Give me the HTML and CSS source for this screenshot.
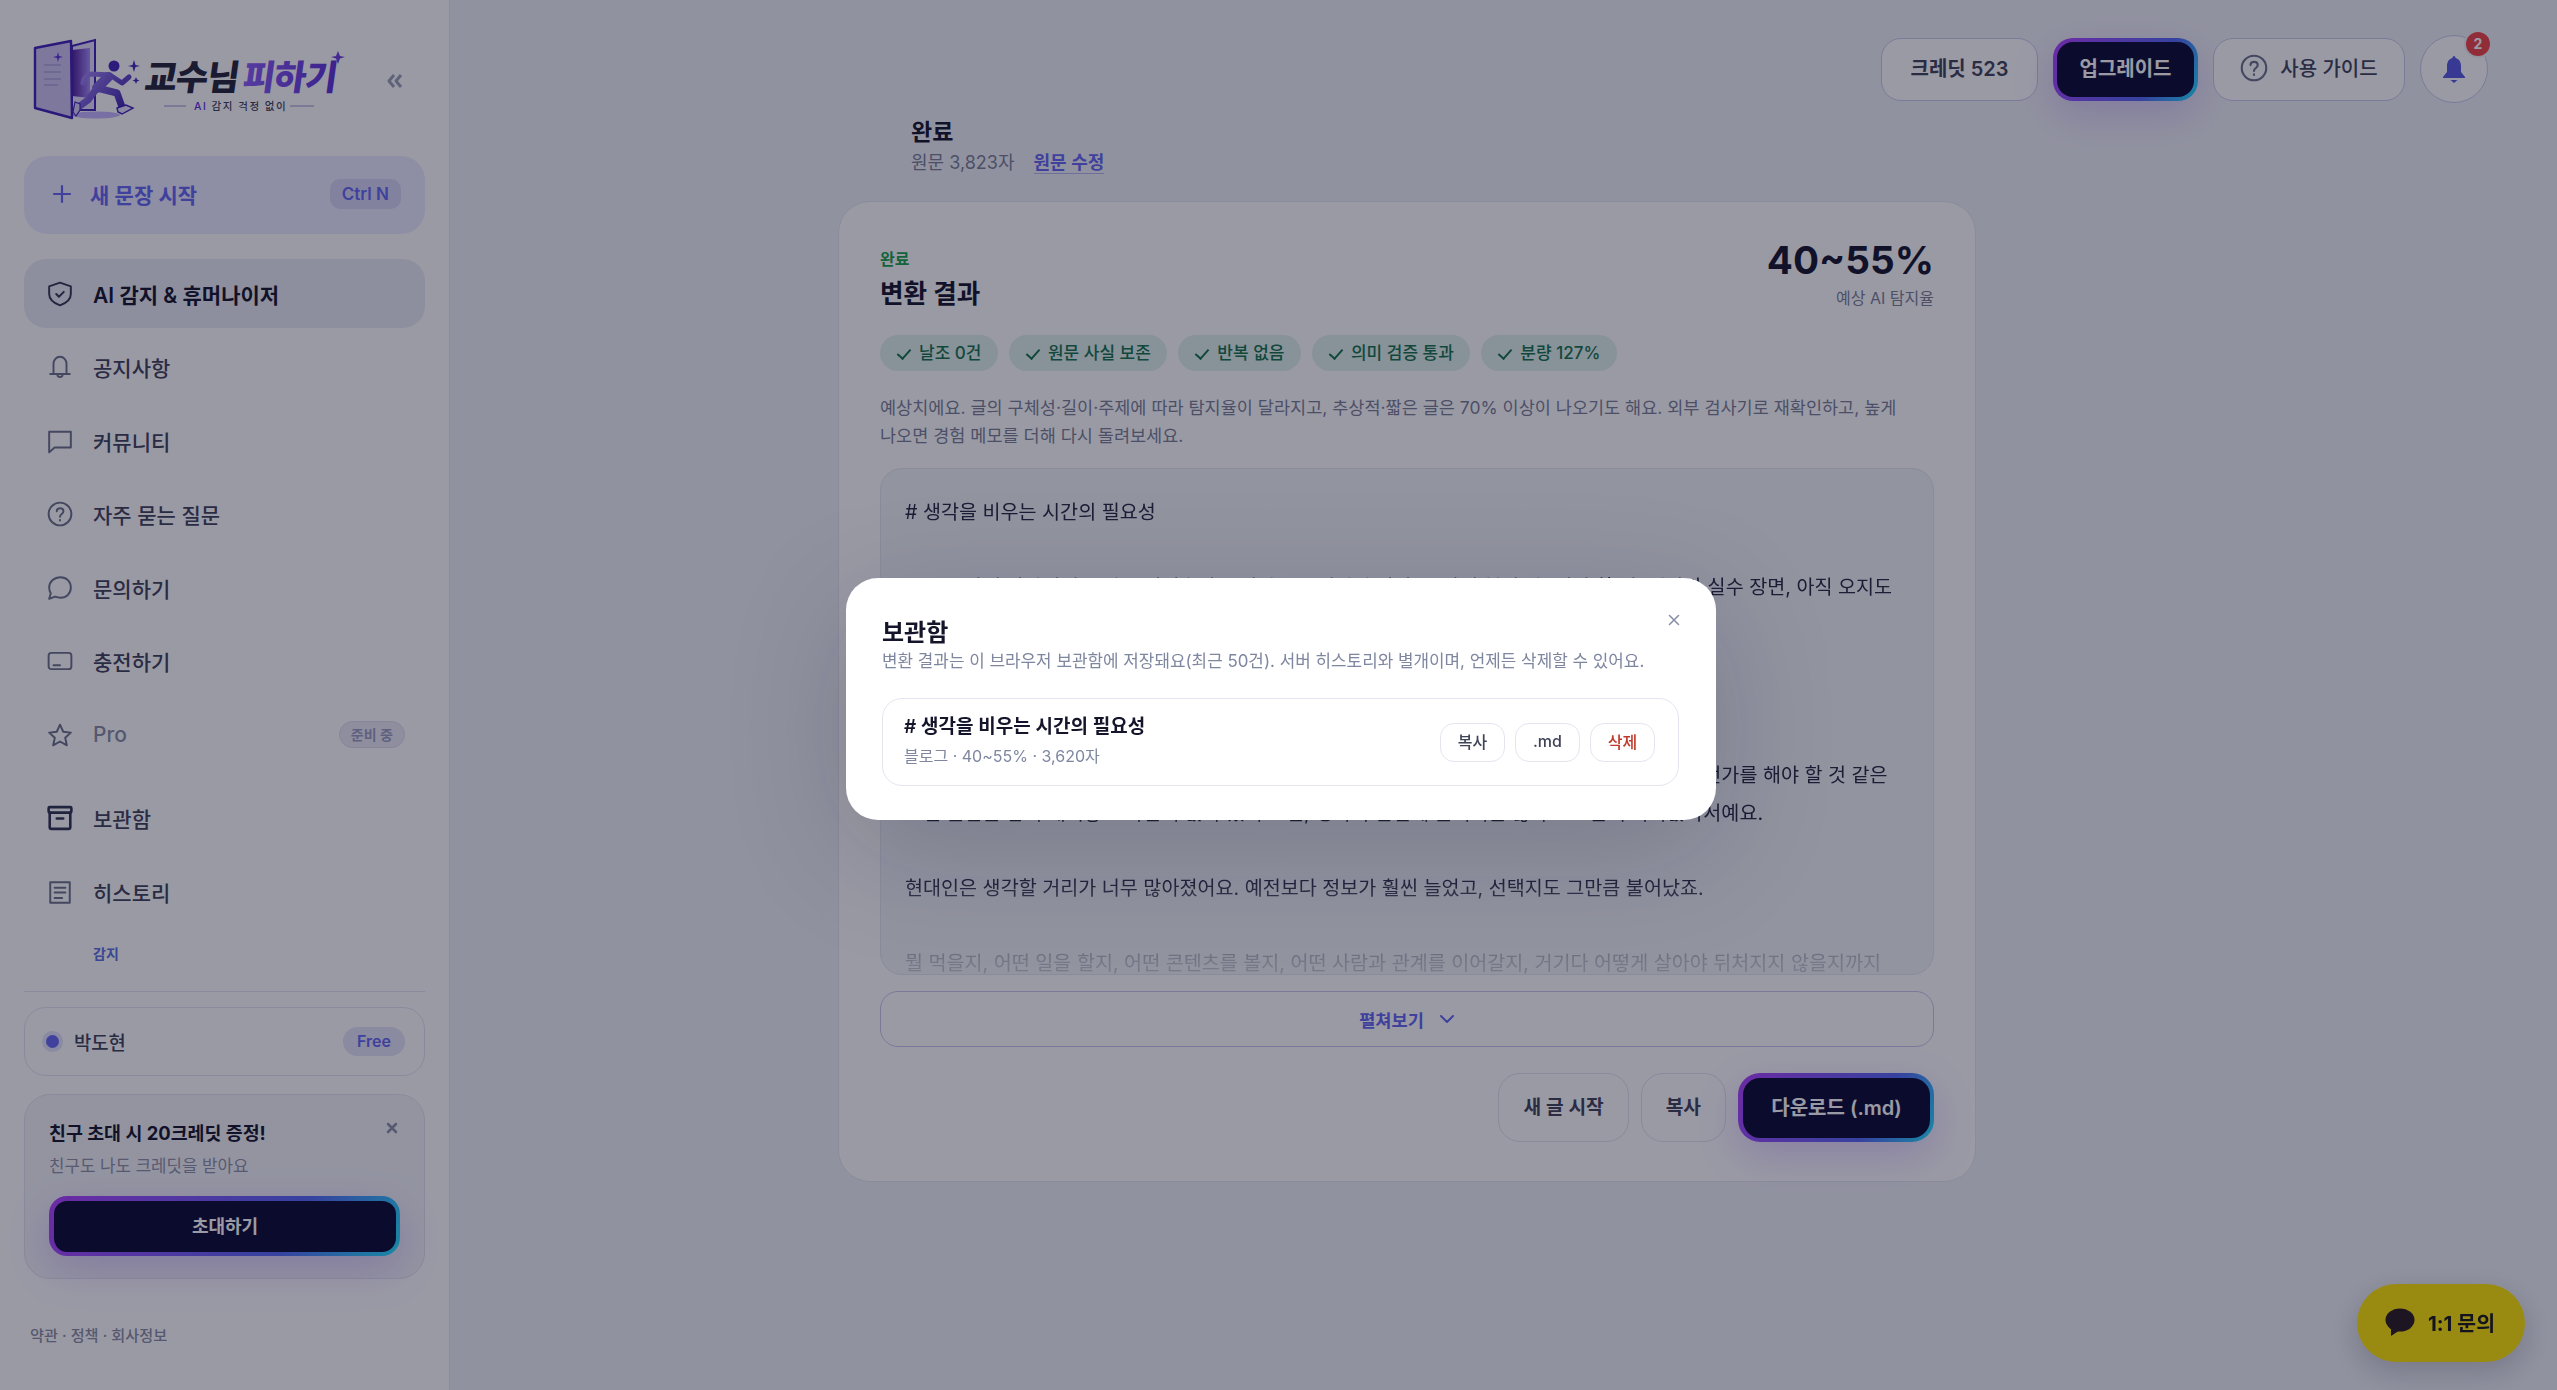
FILE: index.html
```html
<!DOCTYPE html>
<html lang="ko">
<head>
    <meta charset="UTF-8">
    <title>교수님 피하기</title>
    <link rel="stylesheet" href="styles.css">
</head>
<body>
    <aside class="sidebar">
        <div class="brand">
            <svg class="logo" width="320" height="90" viewBox="0 0 320 90">
                <defs>
                    <linearGradient id="doorFill" x1="0" y1="0" x2="1" y2="0">
                        <stop offset="0" stop-color="#4c1d95"/>
                        <stop offset="1" stop-color="#a78bfa"/>
                    </linearGradient>
                    <linearGradient id="runFill" gradientUnits="userSpaceOnUse" x1="50" y1="35" x2="95" y2="75">
                        <stop offset="0" stop-color="#a78bfa"/>
                        <stop offset="1" stop-color="#3b1fa8"/>
                    </linearGradient>
                    <linearGradient id="nameFill" x1="0" y1="0" x2="1" y2="0">
                        <stop offset="0" stop-color="#8b5cf6"/>
                        <stop offset="1" stop-color="#5b30d6"/>
                    </linearGradient>
                </defs>
                <ellipse cx="66" cy="79" rx="24" ry="3.5" fill="#c4b5fd"/>
                <path d="M42 10 L65 4 V74 L42 74 Z" fill="#e2dcf8" stroke="#3f1fb5" stroke-width="2"/>
                <path d="M42 14 L60 12 V62 L42 60 Z" fill="url(#doorFill)"/>
                <path d="M5 12 L41 5 L42 82 L5 72 Z" fill="#cfc6f0" stroke="#3f1fb5" stroke-width="2.4" stroke-linejoin="round"/>
                <path d="M14 29 H31 M14 36 H31 M14 43 H31 M14 49 H28" stroke="#9a8fd0" stroke-width="1.2"/>
                <path d="M28 16 L29 20 L33 21 L29 22 L28 26 L27 22 L23 21 L27 20 Z" fill="#5b30d6"/>
                <circle cx="84" cy="30" r="5.5" fill="#4526b8"/>
                <g fill="none" stroke="url(#runFill)" stroke-linecap="round" stroke-linejoin="round">
                    <path d="M80 39 L62 38 C57 38 54 42 53 47 M80 39 L92 47 L99 41" stroke-width="5"/>
                    <path d="M78 41 L67 52" stroke-width="10"/>
                    <path d="M67 52 L58 64 L47 72 M67 52 L87 57 L92 71" stroke-width="7"/>
                </g>
                <path d="M45 66 L50 68 L50 74 L46 80 L43 76 Z" fill="#d8d0f4" stroke="#4526b8" stroke-width="1.2"/>
                <path d="M87 72 L96 69 L103 72 L92 78 L88 76 Z" fill="#e6e1fa" stroke="#3f1fb5" stroke-width="1.4"/>
                <path d="M104 24 L105.5 29 L110 30 L105.5 31 L104 36 L102.5 31 L98 30 L102.5 29 Z" fill="#4526b8"/>
                <path d="M106 41 L107 43.5 L109.5 44.5 L107 45.5 L106 48 L105 45.5 L102.5 44.5 L105 43.5 Z" fill="#4526b8"/>
                <path d="M308 15 L310 20 L315 21 L310 22.5 L308 28 L306 22.5 L301 21 L306 20 Z" fill="#6d3fe0"/>
                <text class="logo-name" x="114" y="54" transform="skewX(-8) translate(7 0)">교수님</text>
                <text class="logo-name logo-name-accent" x="212" y="54" transform="skewX(-8) translate(7 0)">피하기</text>
                <path d="M134 70 H156 M260 70 H284" stroke="#9a8fd0" stroke-width="1"/>
                <text class="logo-tag" x="164" y="74"><tspan class="logo-tag-ai">AI</tspan> 감지 걱정 없이</text>
            </svg>
            <svg class="collapse" width="16" height="14" viewBox="0 0 16 14" fill="none" stroke="#9aa0b4" stroke-width="3" stroke-linejoin="round">
                <path d="M7 1 L2 7 L7 13 M14 1 L9 7 L14 13"/>
            </svg>
        </div>

        <button class="new-btn">
            <svg width="20" height="20" viewBox="0 0 20 20" stroke="currentColor" stroke-width="2.2" stroke-linecap="round"><path d="M10 2 V18 M2 10 H18"/></svg>
            <span class="new-label">새 문장 시작</span>
            <span class="shortcut">Ctrl N</span>
        </button>

        <nav class="nav">
            <a class="nav-item active">
                <svg class="nav-icon" viewBox="0 0 24 24"><path d="M12 1.5 L22 5 V12 C22 17 17.5 20.5 12 22.5 C6.5 20.5 2 17 2 12 V5 Z"/><path d="M8.5 12 L11 14.5 L15.5 10"/></svg>
                AI 감지 &amp; 휴머나이저
            </a>
            <a class="nav-item">
                <svg class="nav-icon" viewBox="0 0 24 24"><path d="M6 18 V9 C6 5.5 8.5 2.5 12 2.5 C15.5 2.5 18 5.5 18 9 V18 M3 18.5 H21 M9.5 19 C10 22 14 22 14.5 19"/></svg>
                공지사항
            </a>
            <a class="nav-item">
                <svg class="nav-icon" viewBox="0 0 24 24"><path d="M2 3.5 H22 V18 H7 L2 22.5 Z"/></svg>
                커뮤니티
            </a>
            <a class="nav-item">
                <svg class="nav-icon" viewBox="0 0 24 24"><circle cx="12" cy="12" r="10.5"/><path d="M9 9.5 C9 5.8 15.2 5.8 15.2 9.5 C15.2 12 12 12 12 14.5 M12 17.5 V18"/></svg>
                자주 묻는 질문
            </a>
            <a class="nav-item">
                <svg class="nav-icon" viewBox="0 0 24 24"><path d="M12.5 2 C18 2 22 6 22 11.5 C22 17 18 21 12.5 21 C10.5 21 9 20.6 7.5 20 L2 22 L3.5 17 C2.5 15.5 2 13.5 2 11.5 C2 6 7 2 12.5 2 Z"/></svg>
                문의하기
            </a>
            <a class="nav-item">
                <svg class="nav-icon" viewBox="0 0 24 24"><rect x="1.5" y="4.5" width="21" height="15" rx="2.5"/><path d="M6 16 H12"/></svg>
                충전하기
            </a>
            <a class="nav-item muted">
                <svg class="nav-icon" viewBox="0 0 24 24"><path d="M12 2.5 L15 9 L22 9.8 L16.8 14.5 L18.3 21.5 L12 18 L5.7 21.5 L7.2 14.5 L2 9.8 L9 9 Z"/></svg>
                Pro
                <span class="soon">준비 중</span>
            </a>
            <a class="nav-item nav-gap">
                <svg class="nav-icon dark" viewBox="0 0 24 24"><rect x="1.5" y="2" width="21" height="5" rx="1"/><path d="M2.5 7 V20.5 C2.5 21.5 3 22 4 22 H20 C21 22 21.5 21.5 21.5 20.5 V7 M9 12.5 H15"/></svg>
                보관함
            </a>
            <a class="nav-item">
                <svg class="nav-icon" viewBox="0 0 24 24"><rect x="3" y="3" width="18" height="19"/><path d="M7 8 H17 M7 12.5 H17 M7 17.5 H14"/></svg>
                히스토리
            </a>
            <div class="nav-sub">감지</div>
        </nav>

        <div class="side-bottom">
            <div class="user-card">
                <span class="user-dot"></span>
                <span class="user-name">박도현</span>
                <span class="plan">Free</span>
            </div>
            <div class="invite-card">
                <div class="invite-head">
                    <strong>친구 초대 시 20크레딧 증정!</strong>
                    <svg width="12" height="12" viewBox="0 0 12 12" stroke="#8a8fa5" stroke-width="2.5" stroke-linecap="round"><path d="M2 2 L10 10 M10 2 L2 10"/></svg>
                </div>
                <p>친구도 나도 크레딧을 받아요</p>
                <button class="grad-btn invite-btn">초대하기</button>
            </div>
            <div class="legal">약관 · 정책 · 회사정보</div>
        </div>
    </aside>

    <main class="main">
        <header class="topbar">
            <button class="top-btn">크레딧 523</button>
            <button class="grad-btn upgrade-btn">업그레이드</button>
            <button class="top-btn guide-btn">
                <svg class="nav-icon" viewBox="0 0 24 24"><circle cx="12" cy="12" r="10.5"/><path d="M9 9.5 C9 5.8 15.2 5.8 15.2 9.5 C15.2 12 12 12 12 14.5 M12 17.5 V18"/></svg>
                사용 가이드
            </button>
            <button class="bell-btn">
                <svg width="24" height="28" viewBox="0 0 24 28" fill="#5558e0"><path d="M12 1 C13 1 13.5 2 13.5 3 C17.5 4 19 7.5 19 11 V17 L23 22 V23 H1 V22 L5 17 V11 C5 7.5 6.5 4 10.5 3 C10.5 2 11 1 12 1 Z"/><path d="M8.5 25 H15.5 L12 28 Z"/></svg>
                <span class="bell-badge">2</span>
            </button>
        </header>

        <section class="content">
            <div class="status">
                <h3>완료</h3>
                <div class="status-sub">원문 3,823자 <a>원문 수정</a></div>
            </div>

            <div class="card">
                <div class="card-head">
                    <div class="card-title">
                        <div class="done">완료</div>
                        <h2>변환 결과</h2>
                    </div>
                    <div class="score">
                        <div class="score-value">40~55%</div>
                        <div class="score-label">예상 AI 탐지율</div>
                    </div>
                </div>

                <div class="chips">
                    <span class="chip">날조 0건</span>
                    <span class="chip">원문 사실 보존</span>
                    <span class="chip">반복 없음</span>
                    <span class="chip">의미 검증 통과</span>
                    <span class="chip">분량 127%</span>
                </div>

                <p class="note">예상치에요. 글의 구체성·길이·주제에 따라 탐지율이 달라지고, 추상적·짧은 글은 70% 이상이 나오기도 해요. 외부 검사기로 재확인하고, 높게 나오면 경험 메모를 더해 다시 돌려보세요.</p>

                <div class="result">
                    <div class="result-text"># 생각을 비우는 시간의 필요성

요즘은 밤에 잠자리에 누워도 머릿속이 좀처럼 조용해지지 않아요. 낮에 했던 말, 내일 할 일, 지나간 실수 장면, 아직 오지도
않은 일까지 차례로 떠올라요.

쉬는 시간에도 휴대폰을 손에 쥐고 있으니 머리가 쉴 틈이 없어요.

그래서 머릿속을 쉬게 하려면 가끔은 아무것도 하지 않는 시간을 일부러 만들어둘 필요가 있어요. 무언가를 해야 할 것 같은
그런 불안을 잠시 내려놓고 가만히 앉아 있어 보면, 생각이 한번에 풀리지는 않아도 조금씩 가라앉아서예요.

현대인은 생각할 거리가 너무 많아졌어요. 예전보다 정보가 훨씬 늘었고, 선택지도 그만큼 불어났죠.

뭘 먹을지, 어떤 일을 할지, 어떤 콘텐츠를 볼지, 어떤 사람과 관계를 이어갈지, 거기다 어떻게 살아야 뒤처지지 않을지까지</div>
                </div>

                <button class="expand">
                    펼쳐보기
                    <svg width="16" height="10" viewBox="0 0 16 10" fill="none" stroke="currentColor" stroke-width="2" stroke-linecap="round" stroke-linejoin="round"><path d="M2 2 L8 8 L14 2"/></svg>
                </button>

                <div class="actions">
                    <button class="act-btn">새 글 시작</button>
                    <button class="act-btn">복사</button>
                    <button class="grad-btn download-btn">다운로드 (.md)</button>
                </div>
            </div>
        </section>
    </main>

    <button class="kakao">
        <svg width="30" height="28" viewBox="0 0 30 28" fill="#2a1a20"><ellipse cx="15" cy="12" rx="14.5" ry="11.5"/><path d="M6 19 L6 28 L15 22 Z"/></svg>
        1:1 문의
    </button>

    <div class="overlay">
        <div class="modal">
            <div class="modal-head">
                <h2>보관함</h2>
                <svg class="modal-close" width="12" height="12" viewBox="0 0 12 12" stroke="#8a90a8" stroke-width="1.6" stroke-linecap="round"><path d="M1.5 1.5 L10.5 10.5 M10.5 1.5 L1.5 10.5"/></svg>
            </div>
            <p class="modal-desc">변환 결과는 이 브라우저 보관함에 저장돼요(최근 50건). 서버 히스토리와 별개이며, 언제든 삭제할 수 있어요.</p>
            <div class="saved">
                <div class="saved-info">
                    <div class="saved-title"># 생각을 비우는 시간의 필요성</div>
                    <div class="saved-meta">블로그 · 40~55% · 3,620자</div>
                </div>
                <div class="saved-actions">
                    <button class="mini-btn">복사</button>
                    <button class="mini-btn">.md</button>
                    <button class="mini-btn danger">삭제</button>
                </div>
            </div>
        </div>
    </div>
</body>
</html>
```

FILE: styles.css
```css
:root {
    --ink: #14152a;
    --text: #3f4358;
    --muted: #7a7f95;
    --icon: #6b7088;
    --indigo: #6366f1;
    --line: #e4e5f0;
    --font: Inter, "Noto Sans CJK KR", sans-serif;
}

* {
    box-sizing: border-box;
}

html, body {
    height: 100%;
}

body {
    margin: 0;
    display: flex;
    overflow: hidden;
    font-family: var(--font);
    color: var(--ink);
    background: #f0f2f6;
}

button {
    font-family: inherit;
    cursor: pointer;
    background: none;
    border: 0;
    padding: 0;
}

h2, h3, p {
    margin: 0;
}

/* sidebar */
.sidebar {
    width: 450px;
    flex: none;
    height: 100vh;
    padding: 36px 24px 0;
    background: #fff;
    border-right: 1px solid #e6e8f0;
    display: flex;
    flex-direction: column;
}

.brand {
    display: flex;
    align-items: center;
    height: 90px;
    padding-left: 6px;
}

.collapse {
    margin-left: 37px;
}

.logo-name {
    font-size: 35px;
    font-weight: 900;
    fill: #232538;
    letter-spacing: -1px;
}

.logo-name-accent {
    fill: url(#nameFill);
}

.logo-tag {
    font-size: 10.5px;
    font-weight: 500;
    letter-spacing: 1.5px;
    fill: #3f4358;
}

.logo-tag-ai {
    fill: #5b30d6;
}

.new-btn {
    margin-top: 30px;
    height: 78px;
    padding: 0 24px 3px 28px;
    border-radius: 24px;
    background: #ebebfe;
    color: var(--indigo);
    display: flex;
    align-items: center;
    gap: 18px;
    font-size: 21px;
    font-weight: 600;
}

.new-label {
    flex: 1;
    text-align: left;
}

.shortcut {
    height: 30px;
    padding: 0 12px;
    border-radius: 10px;
    background: #d6d6f4;
    font-size: 17px;
    font-weight: 600;
    line-height: 30px;
}

.nav {
    margin-top: 25px;
    display: flex;
    flex-direction: column;
    gap: 4.5px;
}

.nav-item {
    height: 69px;
    padding: 0 20px 0 23px;
    border-radius: 22px;
    display: flex;
    align-items: center;
    gap: 20px;
    font-size: 21px;
    font-weight: 500;
    color: var(--text);
}

.nav-item.active {
    background: #eaecf3;
    color: var(--ink);
    font-weight: 600;
}

.nav-item.muted {
    color: #888da2;
}

.nav-gap {
    margin-top: 10px;
}

.nav-icon {
    width: 26px;
    height: 26px;
    flex: none;
    fill: none;
    stroke: var(--icon);
    stroke-width: 1.8;
    stroke-linecap: round;
    stroke-linejoin: round;
}

.nav-icon.dark {
    stroke: #30344e;
    stroke-width: 2.4;
}

.nav-item.active .nav-icon {
    stroke: #33374f;
}

.soon {
    margin-left: auto;
    height: 27px;
    padding: 0 11px;
    border-radius: 14px;
    border: 1px solid #dcdcec;
    background: #ebebf5;
    font-size: 14px;
    font-weight: 600;
    line-height: 25px;
    color: #9a9cc0;
}

.nav-sub {
    margin-top: 12px;
    padding-left: 69px;
    font-size: 14px;
    font-weight: 600;
    color: #5b70e0;
}

.side-bottom {
    margin-top: 28.5px;
    padding-top: 15px;
    border-top: 1px solid #e2e4ee;
}

.user-card {
    height: 69px;
    padding: 0 19px 0 16px;
    border: 1px solid #e2e4ee;
    border-radius: 22px;
    display: flex;
    align-items: center;
    gap: 10px;
}

.user-dot {
    width: 13px;
    height: 13px;
    margin: 0 5px;
    border-radius: 50%;
    background: var(--indigo);
    box-shadow: 0 0 0 4px #e3e3fa;
}

.user-name {
    flex: 1;
    font-size: 18.8px;
    font-weight: 500;
    color: var(--text);
}

.plan {
    height: 29px;
    padding: 0 14px;
    border-radius: 15px;
    background: #e4e4f8;
    font-size: 16px;
    font-weight: 600;
    line-height: 29px;
    color: var(--indigo);
}

.invite-card {
    margin-top: 18px;
    height: 185px;
    padding: 25.5px 24px 0;
    border: 1px solid #e2e4ee;
    border-radius: 26px;
    background: #f4f5f9;
}

.invite-head {
    display: flex;
    justify-content: space-between;
    align-items: flex-start;
    font-size: 18.4px;
    line-height: 24px;
    padding-right: 2px;
}

.invite-head svg {
    margin-top: 1px;
}

.invite-card p {
    margin-top: 9.5px;
    font-size: 16.8px;
    line-height: 24px;
    color: #8d91a5;
}

.grad-btn {
    border: 4px solid transparent;
    color: #fff;
    font-weight: 600;
    padding-bottom: 3px;
    background:
        linear-gradient(#0a0a32, #0a0a32) padding-box,
        linear-gradient(120deg, #b040ff, #5468f5 68%, #1fe2ff) border-box;
    box-shadow: 0 14px 40px rgba(124, 58, 237, 0.22);
}

.invite-btn {
    width: 351px;
    height: 60px;
    margin-top: 17.5px;
    border-width: 5px 4px 4px 5px;
    border-radius: 18px;
    font-size: 18px;
}

.legal {
    margin: 43.5px 0 0 6px;
    font-size: 15.2px;
    font-weight: 500;
    color: #8a8ea2;
}

/* main area */
.main {
    flex: 1;
    min-width: 0;
}

.topbar {
    padding: 35px 69px 0 0;
    display: flex;
    justify-content: flex-end;
    align-items: center;
    gap: 15px;
}

.top-btn {
    width: 157px;
    height: 63px;
    padding-bottom: 3px;
    border: 1px solid #c9c9ea;
    border-radius: 20px;
    background: #fff;
    font-size: 20px;
    font-weight: 600;
    color: var(--text);
}

.guide-btn {
    width: 192px;
    display: flex;
    align-items: center;
    justify-content: center;
    gap: 12px;
    font-weight: 500;
}

.guide-btn .nav-icon {
    width: 28px;
    height: 28px;
}

.upgrade-btn {
    width: 145px;
    height: 63px;
    border-radius: 20px;
    font-size: 20px;
}

.bell-btn {
    position: relative;
    width: 68px;
    height: 68px;
    border: 1px solid #c9c9ea;
    border-radius: 50%;
    background: #fff;
    display: flex;
    align-items: center;
    justify-content: center;
}

.bell-badge {
    position: absolute;
    top: -4px;
    right: -3px;
    width: 24px;
    height: 24px;
    border-radius: 50%;
    background: #ef4444;
    box-shadow: 0 0 0 2px #f0f2f6;
    color: #fff;
    font-size: 14px;
    font-weight: 700;
    line-height: 24px;
    text-align: center;
}

.content {
    width: 1138px;
    margin-left: 388px;
}

.status {
    padding: 14px 0 0 73px;
}

.status h3 {
    font-size: 23px;
    font-weight: 600;
    line-height: 30px;
}

.status-sub {
    margin-top: 4px;
    font-size: 18px;
    line-height: 24px;
    color: var(--muted);
}

.status-sub a {
    margin-left: 14px;
    color: var(--indigo);
    font-weight: 600;
    border-bottom: 1px solid #b6b6ee;
}

.card {
    margin-top: 26px;
    height: 981px;
    padding: 37px 41px 0;
    border: 1px solid #e4e6ee;
    border-radius: 32px;
    background: #fff;
}

.card-head {
    display: flex;
    justify-content: space-between;
}

.card-title {
    padding-top: 9px;
}

.done {
    font-size: 16px;
    font-weight: 600;
    line-height: 22px;
    color: #16a34a;
}

.card-title h2 {
    margin-top: 6px;
    font-size: 25.6px;
    font-weight: 700;
    line-height: 36px;
}

.score {
    text-align: right;
}

.score-value {
    margin: -3px 0 3px;
    font-size: 38.7px;
    font-weight: 700;
    line-height: 48px;
}

.score-label {
    font-size: 16px;
    line-height: 22px;
    color: var(--muted);
}

.chips {
    margin-top: 23px;
    display: flex;
    gap: 11px;
}

.chip {
    height: 36px;
    padding: 0 16.5px 0 39px;
    border-radius: 18px;
    background: #e0f2ea;
    font-size: 17px;
    font-weight: 500;
    line-height: 36px;
    color: #15734a;
    position: relative;
}

.chip::before {
    content: "";
    position: absolute;
    left: 20px;
    top: 11px;
    width: 6px;
    height: 11px;
    border: solid #15734a;
    border-width: 0 2.4px 2.4px 0;
    transform: rotate(42deg);
}

.note {
    margin-top: 23px;
    font-size: 17.5px;
    line-height: 28px;
    color: var(--muted);
    word-break: keep-all;
}

.result {
    margin-top: 18px;
    height: 507px;
    padding: 25px 24px 0;
    border: 1px solid #e4e6ee;
    border-radius: 22px;
    background: #f2f4f7;
    overflow: hidden;
}

.result-text {
    font-size: 19.6px;
    line-height: 37.6px;
    color: #262a40;
    white-space: pre-line;
    -webkit-mask-image: linear-gradient(#000 78%, rgba(0, 0, 0, 0.22) 96%);
    mask-image: linear-gradient(#000 78%, rgba(0, 0, 0, 0.22) 96%);
}

.expand {
    width: 100%;
    height: 56px;
    margin-top: 16px;
    border: 1px solid #c8c6ee;
    border-radius: 18px;
    color: var(--indigo);
    font-size: 17.6px;
    font-weight: 600;
    display: flex;
    align-items: center;
    justify-content: center;
    gap: 15px;
}

.actions {
    margin-top: 26px;
    display: flex;
    justify-content: flex-end;
    gap: 12px;
}

.act-btn {
    height: 69px;
    padding: 0 24px 3px;
    border: 1px solid #e2e3ee;
    border-radius: 22px;
    font-size: 19.2px;
    font-weight: 600;
    color: var(--text);
}

.download-btn {
    width: 196px;
    height: 69px;
    border-width: 5px 4px 4px 5px;
    border-radius: 22px;
    font-size: 20px;
}

.kakao {
    position: fixed;
    right: 32px;
    bottom: 28px;
    width: 168px;
    height: 78px;
    padding: 0 2px 3px 0;
    border-radius: 39px;
    background: #fee500;
    color: #191919;
    font-size: 20.5px;
    font-weight: 700;
    display: flex;
    align-items: center;
    justify-content: center;
    gap: 13px;
    box-shadow: 0 10px 30px rgba(15, 15, 40, 0.2);
}

/* modal */
.overlay {
    position: fixed;
    inset: 0;
    padding: 8px 0 0 5px;
    display: flex;
    align-items: center;
    justify-content: center;
    background: rgba(15, 15, 40, 0.42);
    backdrop-filter: blur(0.6px);
}

.modal {
    width: 870px;
    height: 242px;
    padding: 37px 37px 0 36px;
    border-radius: 32px;
    background: #fff;
    box-shadow: 0 30px 120px rgba(15, 15, 40, 0.18);
}

.modal-head {
    display: flex;
    justify-content: space-between;
    align-items: flex-start;
}

.modal-head h2 {
    font-size: 24px;
    font-weight: 700;
    line-height: 36px;
}

.modal-close {
    margin-top: -1px;
    margin-right: -1px;
}

.modal-desc {
    margin-top: -2px;
    font-size: 16.9px;
    line-height: 24px;
    color: #7e86a0;
}

.saved {
    margin-top: 25px;
    height: 88px;
    padding: 0 23px 0 21px;
    border: 1px solid var(--line);
    border-radius: 20px;
    display: flex;
    align-items: center;
    justify-content: space-between;
}

.saved-info {
    padding-bottom: 3px;
}

.saved-title {
    font-size: 19px;
    font-weight: 600;
    line-height: 28px;
}

.saved-meta {
    margin-top: 3px;
    font-size: 16px;
    line-height: 24px;
    color: #7e86a0;
}

.saved-actions {
    display: flex;
    gap: 10px;
}

.mini-btn {
    width: 65px;
    height: 39px;
    padding: 0 0 2px;
    border: 1px solid var(--line);
    border-radius: 14px;
    background: #fff;
    font-size: 16px;
    font-weight: 500;
    color: #3f4358;
}

.mini-btn.danger {
    color: #c0392b;
}
```
